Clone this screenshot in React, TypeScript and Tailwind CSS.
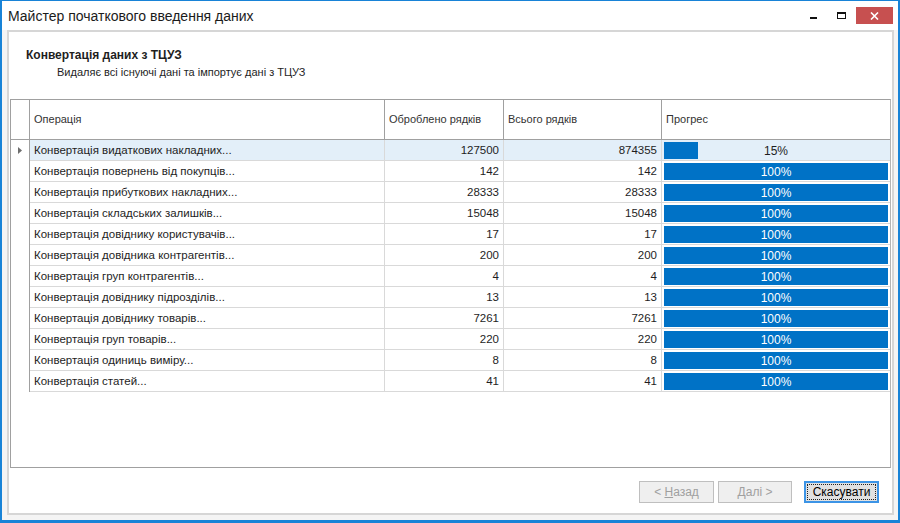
import React from "react";

type Row = { op: string; done: number; total: number };

const rows: Row[] = [
  { op: "Конвертація видаткових накладних...", done: 127500, total: 874355 },
  { op: "Конвертація повернень від покупців...", done: 142, total: 142 },
  { op: "Конвертація прибуткових накладних...", done: 28333, total: 28333 },
  { op: "Конвертація складських залишків...", done: 15048, total: 15048 },
  { op: "Конвертація довіднику користувачів...", done: 17, total: 17 },
  { op: "Конвертація довідника контрагентів...", done: 200, total: 200 },
  { op: "Конвертація груп контрагентів...", done: 4, total: 4 },
  { op: "Конвертація довіднику підрозділів...", done: 13, total: 13 },
  { op: "Конвертація довіднику товарів...", done: 7261, total: 7261 },
  { op: "Конвертація груп товарів...", done: 220, total: 220 },
  { op: "Конвертація одиниць виміру...", done: 8, total: 8 },
  { op: "Конвертація статей...", done: 41, total: 41 },
];

const font = { fontFamily: '"Liberation Sans", Arial, sans-serif' };

function Progress({ pct }: { pct: number }) {
  const full = pct >= 100;
  return (
    <div className="relative h-full w-full">
      <div className="h-full bg-[#0072c6]" style={{ width: `${pct}%` }} />
      <div
        className={`absolute inset-0 flex items-center justify-center text-[12px] ${
          full ? "text-white" : "text-[#1e1e1e]"
        }`}
      >
        {pct}%
      </div>
    </div>
  );
}

export default function App() {
  return (
    <div
      className="w-[900px] h-[523px] flex flex-col bg-[#f4f4f4] border-[#1883d7] border-t border-x-2 border-b-[3px] overflow-hidden"
      style={font}
    >
      {/* title bar */}
      <div className="h-[29px] shrink-0 bg-white flex items-center pl-[6px] relative">
        <span className="text-[14px] text-[#1b1b1b] leading-none">Майстер початкового введення даних</span>
        <div className="ml-auto flex items-center h-full">
          <div className="w-[28px] h-full flex items-center justify-center">
            <div className="w-[7px] h-[2px] bg-[#111] mt-[5px]" />
          </div>
          <div className="w-[28px] h-full flex items-center justify-center">
            <div className="w-[9px] h-[7px] border border-[#111] border-t-2" />
          </div>
          <div className="w-[37px] h-[17px] mr-[5px] ml-[1px] bg-[#c75050] flex items-center justify-center">
            <svg width="9" height="8" viewBox="0 0 9 8">
              <path d="M1 0.5 L8 7.5 M8 0.5 L1 7.5" stroke="white" strokeWidth="1.6" />
            </svg>
          </div>
        </div>
      </div>

      {/* frame */}
      <div className="flex-1 flex flex-col pl-[5px] pr-[4px] pb-[5px]">
        <div className="flex-1 flex flex-col border-2 border-[#d6d6d6] bg-white">
          {/* header */}
          <div className="h-[67px] shrink-0 pl-[17px] pt-[16px] text-[#1e1e1e]">
            <div className="text-[12px] font-bold leading-[15px]">Конвертація даних з ТЦУЗ</div>
            <div className="text-[11px] leading-[14px] pl-[31px] mt-[2px]">
              Видаляє всі існуючі дані та імпортує дані з ТЦУЗ
            </div>
          </div>

          {/* grid */}
          <div className="mx-[1px] h-[369px] border border-[#a0a0a0] border-r-[#b4b4b4] flex flex-col text-[11.5px] text-[#1e1e1e]">
            <div className="h-[40px] shrink-0 flex border-b border-[#a0a0a0] text-[#333] text-[11px]">
              <div className="w-[19px] border-r border-[#a0a0a0]" />
              <div className="w-[355px] border-r border-[#a0a0a0] flex items-center pl-[4px]">Операція</div>
              <div className="w-[119px] border-r border-[#a0a0a0] flex items-center pl-[4px]">Оброблено рядків</div>
              <div className="w-[158px] border-r border-[#a0a0a0] flex items-center pl-[4px]">Всього рядків</div>
              <div className="flex-1 flex items-center pl-[4px]">Прогрес</div>
            </div>
            {rows.map((r, i) => {
              const pct = Math.round((r.done / r.total) * 100);
              const sel = i === 0;
              return (
                <div key={i} className="h-[21px] shrink-0 flex">
                  <div className="w-[19px] border-r border-[#a0a0a0] flex items-center justify-center">
                    {sel && (
                      <svg width="4" height="7" viewBox="0 0 4 7">
                        <path d="M0 0 L4 3.5 L0 7 Z" fill="#6e6e6e" />
                      </svg>
                    )}
                  </div>
                  <div
                    className={`flex-1 flex border-b border-[#d9d9d9] ${sel ? "bg-[#e3eff9]" : ""}`}
                  >
                    <div className="w-[355px] border-r border-[#d9d9d9] flex items-center pl-[4px] pt-[1px] whitespace-nowrap">
                      {r.op}
                    </div>
                    <div className="w-[119px] border-r border-[#d9d9d9] flex items-center justify-end pr-[4px] pt-[1px]">
                      {r.done}
                    </div>
                    <div className="w-[158px] border-r border-[#d9d9d9] flex items-center justify-end pr-[4px] pt-[1px]">
                      {r.total}
                    </div>
                    <div className="flex-1 p-[2px] pb-[1px]">
                      <Progress pct={pct} />
                    </div>
                  </div>
                </div>
              );
            })}
            <div className="flex-1" />
          </div>

          {/* buttons */}
          <div className="flex-1 flex items-start justify-end pt-[13px] pr-[13px] text-[12px]">
            <button className="w-[75px] h-[22px] border border-[#bfbfbf] bg-[#efefef] text-[#a0a0a0]">
              &lt; <span className="underline">Н</span>азад
            </button>
            <button className="w-[74px] h-[22px] ml-[4px] border border-[#bfbfbf] bg-[#efefef] text-[#a0a0a0]">
              <span className="underline">Д</span>алі &gt;
            </button>
            <button className="w-[75px] h-[22px] ml-[12px] border-2 border-[#3c94e6] bg-[#e1e1e1] text-black p-[1px]">
              <div className="w-full h-full border border-dotted border-[#222] flex items-center justify-center">
                Скасувати
              </div>
            </button>
          </div>
        </div>
      </div>
    </div>
  );
}
